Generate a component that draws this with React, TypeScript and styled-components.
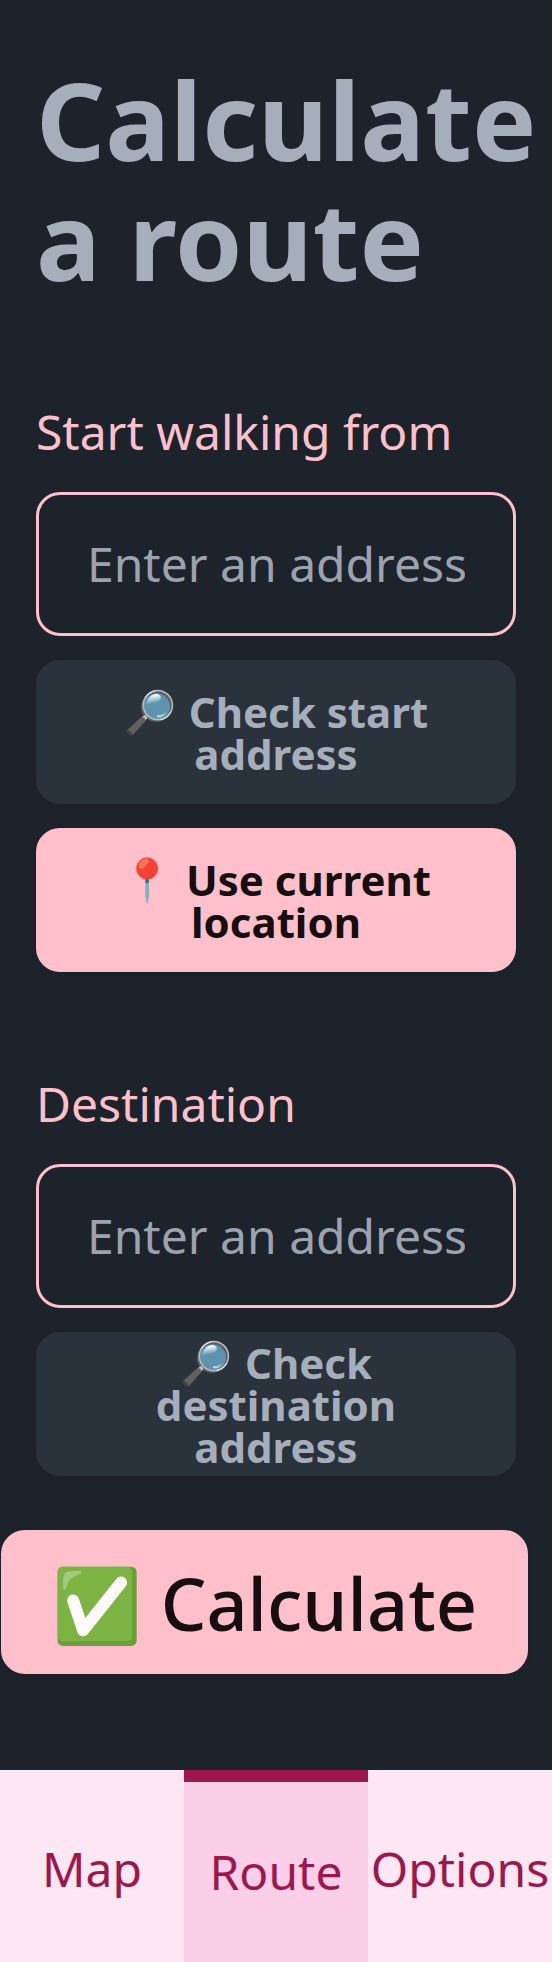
import React from "react";
import styled, { createGlobalStyle, css } from "styled-components";

const GlobalStyle = createGlobalStyle`
  *, *::before, *::after { box-sizing: border-box; }
  body {
    margin: 0;
    background: #1d232a;
    color: #a6adbb;
    font-family: "Noto Sans", sans-serif;
    font-size: 48px;
    line-height: 72px;
  }
`;

const Page = styled.div`
  display: flex;
  flex-direction: column;
  height: 1962px;
  width: 552px;
  overflow: hidden;
`;

const Main = styled.main`
  display: flex;
  flex: 1;
  flex-direction: column;
  padding: 60px 36px 0;
`;

const Title = styled.h1`
  margin: 0;
  font-size: 108px;
  line-height: 120px;
  font-weight: 700;
`;

const Field = styled.section`
  display: flex;
  flex-direction: column;
  gap: 24px;
  margin-top: 96px;
`;

const Label = styled.label`
  color: #ffc0cb;
`;

const AddressInput = styled.input`
  width: 100%;
  height: 144px;
  padding: 0 48px 2px;
  border: 3px solid #ffc0cb;
  border-radius: 24px;
  background: transparent;
  color: #a6adbb;
  font: inherit;
  outline: none;

  &::placeholder {
    color: #9ca3af;
    opacity: 1;
  }
`;

const Button = styled.button<{ $primary?: boolean; $large?: boolean }>`
  width: 100%;
  height: 144px;
  flex-shrink: 0;
  padding: 2px 48px 0;
  border: 3px solid transparent;
  border-color: ${(p) => (p.$primary ? "#ffc0cb" : "#2a323c")};
  border-radius: 24px;
  background: ${(p) => (p.$primary ? "#ffc0cb" : "#2a323c")};
  color: ${(p) => (p.$primary ? "#160e0f" : "#a6adbb")};
  box-shadow: 0 3px 6px rgba(0, 0, 0, 0.05);
  font-family: inherit;
  font-size: 42px;
  font-weight: 700;
  line-height: 42px;
  text-align: center;

  ${(p) =>
    p.$large &&
    css`
      align-self: center;
      width: auto;
      margin: 54px 23px 0 0;
      font-size: 72px;
      font-weight: 500;
      line-height: 72px;
      white-space: nowrap;
    `}
`;

const Emoji = styled.span`
  margin-right: 2px;
  line-height: 30px;
  vertical-align: 1px;
`;

const BottomNav = styled.nav`
  display: grid;
  grid-template-columns: repeat(3, 184px);
  height: 192px;
`;

const Tab = styled.button<{ $active?: boolean }>`
  display: flex;
  align-items: center;
  justify-content: center;
  padding: ${(p) => (p.$active ? "0" : "6px 0 0")};
  border: 0 solid #9d174d;
  border-top-width: ${(p) => (p.$active ? "12px" : "0")};
  background: ${(p) => (p.$active ? "#fbcfe8" : "#fce7f3")};
  color: #9d174d;
  font: inherit;
`;

export default function App() {
  return (
    <>
      <GlobalStyle />
      <Page>
        <Main>
          <Title>Calculate a route</Title>
          <Field>
            <Label htmlFor="start">Start walking from</Label>
            <AddressInput id="start" placeholder="Enter an address" />
            <Button><Emoji>🔎</Emoji> Check start address</Button>
            <Button $primary><Emoji>📍</Emoji> Use current location</Button>
          </Field>
          <Field>
            <Label htmlFor="destination">Destination</Label>
            <AddressInput id="destination" placeholder="Enter an address" />
            <Button><Emoji>🔎</Emoji> Check destination address</Button>
          </Field>
          <Button $primary $large>✅ Calculate</Button>
        </Main>
        <BottomNav>
          <Tab>Map</Tab>
          <Tab $active>Route</Tab>
          <Tab>Options</Tab>
        </BottomNav>
      </Page>
    </>
  );
}
